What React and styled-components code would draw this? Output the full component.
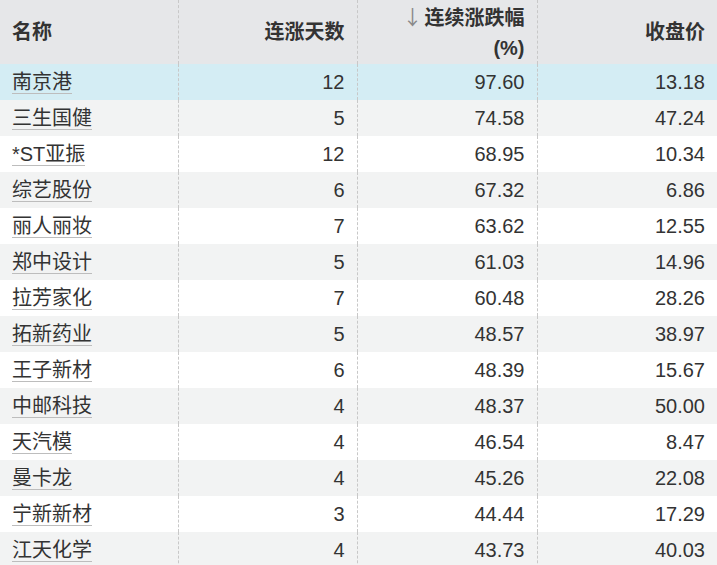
import React from "react";
import styled, { createGlobalStyle } from "styled-components";

const Global = createGlobalStyle`
  html, body { margin: 0; padding: 0; background: #fff; }
  body { font-family: "Liberation Sans", Arial, "Noto Sans CJK SC", sans-serif; color: #333; }
`;

const Table = styled.table`
  width: 717px;
  border-collapse: collapse;
  border-spacing: 0;
  table-layout: fixed;
  font-size: 20px;
`;

const HeadRow = styled.tr`
  height: 64px;
  background: #e6e7e9;
`;

const HeadCell = styled.th`
  padding: 0 12px;
  font-weight: bold;
  line-height: 30px;
  color: #333;
  text-align: ${(p) => (p.$left ? "left" : "right")};
  vertical-align: middle;
  border-left: ${(p) => (p.$first ? "none" : "1px dashed #c8c8c8")};
`;

const Arrow = styled.span`
  font-family: "Noto Sans CJK SC", sans-serif;
  font-weight: normal;
  color: #8a8a8a;
  margin-right: 2px;
`;

const Row = styled.tr`
  height: 36px;
  background: ${(p) => (p.$active ? "#d4edf4" : p.$odd ? "#f2f3f3" : "#ffffff")};
`;

const Cell = styled.td`
  padding: 0 12px;
  line-height: 24px;
  color: #333;
  text-align: ${(p) => (p.$left ? "left" : "right")};
  vertical-align: middle;
  border-left: ${(p) => (p.$first ? "none" : "1px dashed #c8c8c8")};
  white-space: nowrap;
`;

const NameLink = styled.span`
  color: #333;
  border-bottom: 1px solid #bdbdbd;
`;

const rows = [
  ["南京港", "12", "97.60", "13.18"],
  ["三生国健", "5", "74.58", "47.24"],
  ["*ST亚振", "12", "68.95", "10.34"],
  ["综艺股份", "6", "67.32", "6.86"],
  ["丽人丽妆", "7", "63.62", "12.55"],
  ["郑中设计", "5", "61.03", "14.96"],
  ["拉芳家化", "7", "60.48", "28.26"],
  ["拓新药业", "5", "48.57", "38.97"],
  ["王子新材", "6", "48.39", "15.67"],
  ["中邮科技", "4", "48.37", "50.00"],
  ["天汽模", "4", "46.54", "8.47"],
  ["曼卡龙", "4", "45.26", "22.08"],
  ["宁新新材", "3", "44.44", "17.29"],
  ["江天化学", "4", "43.73", "40.03"],
];

export default function App() {
  return (
    <>
      <Global />
      <Table>
        <colgroup>
          <col style={{ width: 178 }} />
          <col style={{ width: 179 }} />
          <col style={{ width: 180 }} />
          <col style={{ width: 180 }} />
        </colgroup>
        <thead>
          <HeadRow>
            <HeadCell $left $first>名称</HeadCell>
            <HeadCell>连涨天数</HeadCell>
            <HeadCell>
              <Arrow>↓</Arrow>连续涨跌幅
              <br />
              (%)
            </HeadCell>
            <HeadCell>收盘价</HeadCell>
          </HeadRow>
        </thead>
        <tbody>
          {rows.map((r, i) => (
            <Row key={r[0]} $active={i === 0} $odd={i % 2 === 1}>
              <Cell $left $first>
                <NameLink>{r[0]}</NameLink>
              </Cell>
              <Cell>{r[1]}</Cell>
              <Cell>{r[2]}</Cell>
              <Cell>{r[3]}</Cell>
            </Row>
          ))}
        </tbody>
      </Table>
    </>
  );
}
